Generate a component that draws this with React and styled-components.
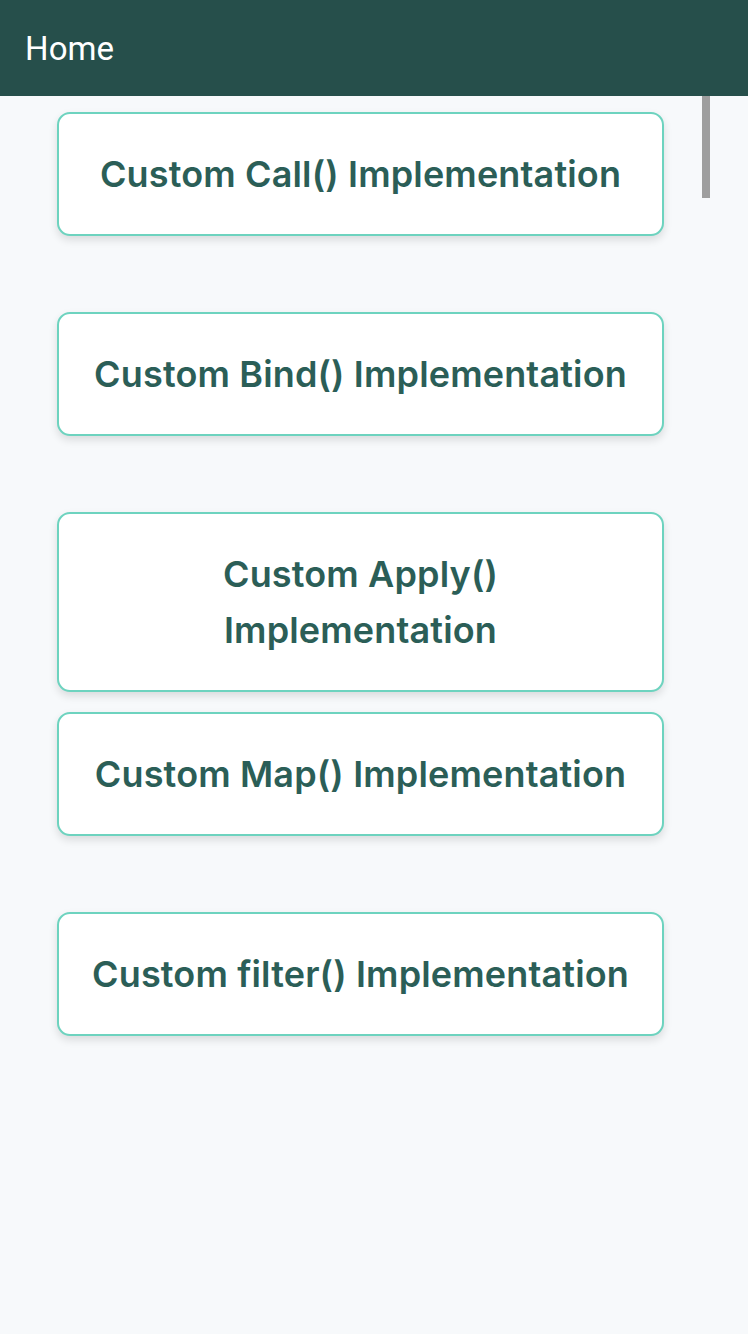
import React from "react";
import styled, { createGlobalStyle } from "styled-components";

const Global = createGlobalStyle`
  html, body { margin: 0; padding: 0; }
  body { background: #f7f9fb; font-family: Inter, "Noto Sans", sans-serif; }
  #root { min-height: 100vh; }
`;

const Page = styled.div`
  min-height: 1334px;
  background: #f7f9fb;
  position: relative;
  overflow: hidden;
`;

const Header = styled.header`
  height: 96px;
  background: #264f4b;
  display: flex;
  align-items: center;
  padding-left: 25px;
  box-sizing: border-box;
`;

const Title = styled.h1`
  margin: 0;
  color: #ffffff;
  font-family: Roboto, "Liberation Sans", sans-serif;
  font-weight: 400;
  font-size: 33px;
  letter-spacing: 0.1px;
`;

const Body = styled.main`
  position: relative;
  height: 1238px;
`;

const List = styled.div`
  display: grid;
  grid-auto-rows: 200px;
  padding: 16px 0 0 57px;
  width: 607px;
`;

const Card = styled.button`
  align-self: start;
  box-sizing: border-box;
  width: 607px;
  background: #ffffff;
  border: 2px solid #6dd3bf;
  border-radius: 13px;
  box-shadow: 0 4px 8px rgba(0, 0, 0, 0.12);
  padding: 32px;
  font-family: Inter, "Noto Sans", sans-serif;
  font-weight: 600;
  font-size: 36px;
  letter-spacing: 0.15px;
  line-height: 56px;
  color: #2b5e57;
  text-align: center;
  cursor: pointer;
`;

const Thumb = styled.div`
  position: absolute;
  top: 0;
  left: 702px;
  width: 8px;
  height: 102px;
  background: #9e9e9e;
`;

const items = [
  "Custom Call() Implementation",
  "Custom Bind() Implementation",
  "Custom Apply() Implementation",
  "Custom Map() Implementation",
  "Custom filter() Implementation",
];

export default function App() {
  return (
    <Page>
      <Global />
      <Header>
        <Title>Home</Title>
      </Header>
      <Body>
        <List>
          {items.map((t) => (
            <Card key={t}>{t}</Card>
          ))}
        </List>
        <Thumb />
      </Body>
    </Page>
  );
}
